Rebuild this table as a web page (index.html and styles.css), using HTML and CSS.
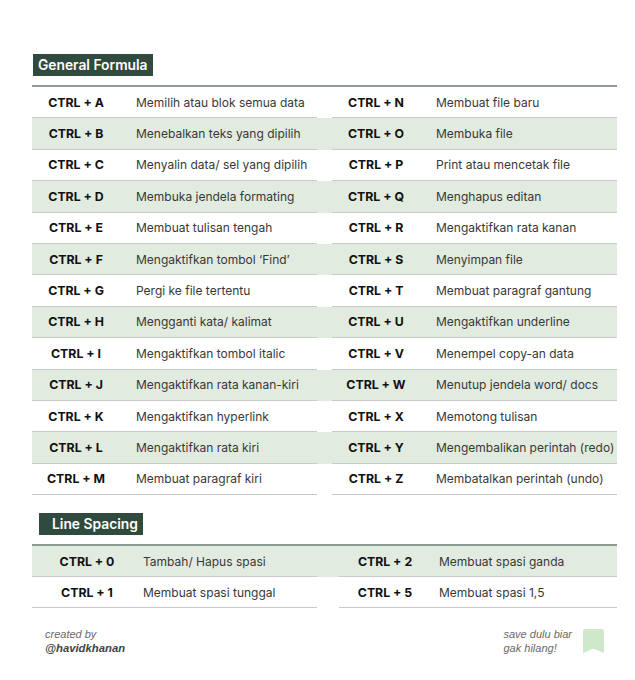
FILE: index.html
```html
<!DOCTYPE html>
<html lang="id">
<head>
<meta charset="utf-8">
<title>Shortcut Word</title>
<link rel="stylesheet" href="styles.css">
</head>
<body>
<div class="page">
  <div class="label label-general">General Formula</div>
  <div class="table">
    <div class="row"><div class="cell"><span class="key">CTRL + A</span><span class="desc">Memilih atau blok semua data</span></div><div class="cell"><span class="key">CTRL + N</span><span class="desc">Membuat file baru</span></div></div>
    <div class="row alt"><div class="cell"><span class="key">CTRL + B</span><span class="desc">Menebalkan teks yang dipilih</span></div><div class="cell"><span class="key">CTRL + O</span><span class="desc">Membuka file</span></div></div>
    <div class="row"><div class="cell"><span class="key">CTRL + C</span><span class="desc">Menyalin data/ sel yang dipilih</span></div><div class="cell"><span class="key">CTRL + P</span><span class="desc">Print atau mencetak file</span></div></div>
    <div class="row alt"><div class="cell"><span class="key">CTRL + D</span><span class="desc">Membuka jendela formating</span></div><div class="cell"><span class="key">CTRL + Q</span><span class="desc">Menghapus editan</span></div></div>
    <div class="row"><div class="cell"><span class="key">CTRL + E</span><span class="desc">Membuat tulisan tengah</span></div><div class="cell"><span class="key">CTRL + R</span><span class="desc">Mengaktifkan rata kanan</span></div></div>
    <div class="row alt"><div class="cell"><span class="key">CTRL + F</span><span class="desc">Mengaktifkan tombol ‘Find’</span></div><div class="cell"><span class="key">CTRL + S</span><span class="desc">Menyimpan file</span></div></div>
    <div class="row"><div class="cell"><span class="key">CTRL + G</span><span class="desc">Pergi ke file tertentu</span></div><div class="cell"><span class="key">CTRL + T</span><span class="desc">Membuat paragraf gantung</span></div></div>
    <div class="row alt"><div class="cell"><span class="key">CTRL + H</span><span class="desc">Mengganti kata/ kalimat</span></div><div class="cell"><span class="key">CTRL + U</span><span class="desc">Mengaktifkan underline</span></div></div>
    <div class="row"><div class="cell"><span class="key">CTRL + I</span><span class="desc">Mengaktifkan tombol italic</span></div><div class="cell"><span class="key">CTRL + V</span><span class="desc">Menempel copy-an data</span></div></div>
    <div class="row alt"><div class="cell"><span class="key">CTRL + J</span><span class="desc">Mengaktifkan rata kanan-kiri</span></div><div class="cell"><span class="key">CTRL + W</span><span class="desc">Menutup jendela word/ docs</span></div></div>
    <div class="row"><div class="cell"><span class="key">CTRL + K</span><span class="desc">Mengaktifkan hyperlink</span></div><div class="cell"><span class="key">CTRL + X</span><span class="desc">Memotong tulisan</span></div></div>
    <div class="row alt"><div class="cell"><span class="key">CTRL + L</span><span class="desc">Mengaktifkan rata kiri</span></div><div class="cell"><span class="key">CTRL + Y</span><span class="desc">Mengembalikan perintah (redo)</span></div></div>
    <div class="row"><div class="cell"><span class="key">CTRL + M</span><span class="desc">Membuat paragraf kiri</span></div><div class="cell"><span class="key">CTRL + Z</span><span class="desc">Membatalkan perintah (undo)</span></div></div>
  </div>

  <div class="label label-spacing">Line Spacing</div>
  <div class="table table-spacing">
    <div class="row alt"><div class="cell cell-l"><span class="key">CTRL + 0</span><span class="desc">Tambah/ Hapus spasi</span></div><div class="cell cell-r"><span class="key">CTRL + 2</span><span class="desc">Membuat spasi ganda</span></div></div>
    <div class="row"><div class="cell cell-l"><span class="key">CTRL + 1</span><span class="desc">Membuat spasi tunggal</span></div><div class="cell cell-r"><span class="key">CTRL + 5</span><span class="desc">Membuat spasi 1,5</span></div></div>
  </div>

  <div class="footer">
    <div class="credit">
      <div>created by</div>
      <div class="handle">@havidkhanan</div>
    </div>
    <div class="save">
      <div class="save-text">
        <div>save dulu biar</div>
        <div>gak hilang!</div>
      </div>
      <svg class="bookmark" width="21" height="24" viewBox="0 0 21 24" aria-hidden="true">
        <path d="M2 0 H19 Q21 0 21 2 V24 L10.5 19.5 L0 24 V2 Q0 0 2 0 Z" fill="#cfe8c9"/>
      </svg>
    </div>
  </div>
</div>
</body>
</html>
```
FILE: styles.css
```css
* { box-sizing: border-box; }
html, body { margin: 0; padding: 0; background: #ffffff; }
body {
  font-family: "Inter", "Liberation Sans", sans-serif;
  color: #222;
}
.page {
  width: 635px;
  padding: 54px 18px 0 32px;
}
.label {
  display: inline-block;
  background: #304a3e;
  color: #ffffff;
  font-size: 13.8px;
  font-weight: 600;
  height: 22px;
  line-height: 22px;
}
.label-general {
  margin-left: 1px;
  padding: 0 5px 0 5px;
}
.label-spacing {
  margin-left: 7px;
  margin-top: 18px;
  padding: 0 5px 0 13px;
}
.table {
  margin-top: 9px;
  border-top: 2px solid #8e9b94;
}
.row {
  display: flex;
  gap: 15px;
}
.row.alt { background: #e2ebdf; }
.cell {
  flex: 0 0 285px;
  height: 31.4px;
  display: flex;
  align-items: center;
  border-bottom: 1px solid #c8ccc9;
}
.key {
  flex: 0 0 88px;
  text-align: center;
  font-weight: 700;
  font-size: 12.3px;
  color: #111;
}
.desc {
  padding-left: 16px;
  font-size: 12px;
  color: #383838;
  white-space: nowrap;
}
.table-spacing .row { gap: 22px; }
.table-spacing .cell { height: 31px; }
.table-spacing .cell-r { flex: 0 0 278px; }
.table-spacing .cell-l .key { flex: 0 0 110px; }
.table-spacing .cell-l .desc { padding-left: 1px; }
.table-spacing .cell-r .key { flex: 0 0 92px; }
.table-spacing .cell-r .desc { padding-left: 8px; }
.footer {
  margin-top: 20px;
  display: flex;
  justify-content: space-between;
  align-items: flex-start;
  font-family: "Liberation Sans", sans-serif;
  font-style: italic;
  font-size: 11px;
  line-height: 13.5px;
  color: #6a6a6a;
}
.credit { padding-left: 13px; }
.handle { font-weight: 700; color: #444; font-size: 11.3px; }
.save {
  display: flex;
  align-items: flex-start;
  gap: 11px;
  padding-right: 13px;
}
.bookmark { margin-top: 1px; }
```
